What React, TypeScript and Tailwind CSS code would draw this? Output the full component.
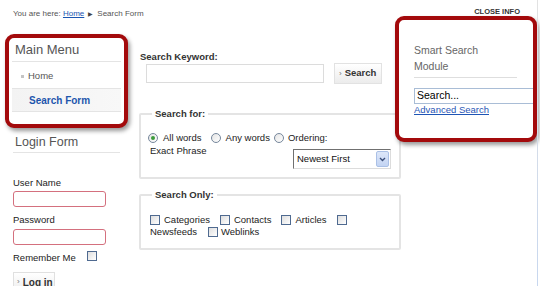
import React from "react";

const Radio = ({ checked }: { checked?: boolean }) => (
  <span className="flex h-[10px] w-[10px] items-center justify-center rounded-full border border-[#76879c] bg-gradient-to-br from-[#e4e4e4] to-white">
    {checked && <span className="h-[4px] w-[4px] rounded-full bg-[#3c9b3c]" />}
  </span>
);

const Check = () => (
  <span className="inline-block h-[10px] w-[10px] border border-[#4f6a90] bg-gradient-to-br from-[#dedede] to-white" />
);

const Legend = ({ children }: { children: React.ReactNode }) => (
  <legend className="ml-[11px] px-[3px] text-[9.5px] font-bold leading-[12px] text-[#333]">
    {children}
  </legend>
);

const App = () => {
  return (
    <div className="flex h-[286px] w-[540px] overflow-hidden bg-white font-['Liberation_Sans',Arial,sans-serif] text-[#333]">
      {/* left + middle */}
      <div className="flex w-[401px] shrink-0 flex-col">
        <div className="h-[34px] shrink-0 pl-[13px] pt-[9px] text-[8px] leading-[10px] text-[#555]">
          You are here: <span className="text-[#1a55b0] underline">Home</span>
          <span className="mx-[4px] text-[6px] text-[#444]">▶</span>
          Search Form
        </div>

        <div className="flex">
          {/* left column */}
          <div className="w-[138px] shrink-0">
            <div className="ml-[5px] h-[94px] w-[123px] rounded-[9px] border-4 border-[#a30a0c] bg-white px-[3px] shadow-[2px_3px_4px_rgba(0,0,0,0.4)]">
              <div className="h-[24px] border-b border-[#e4e4e4] pl-[3px] pt-[4px] text-[13px] leading-[16px] text-[#555]">
                Main Menu
              </div>
              <div className="flex h-[27px] items-center border-b border-[#e4e4e4] pl-[9px] pt-[3px] text-[9.5px] text-[#555]">
                <span className="mr-[4px] h-[3px] w-[3px] bg-[#c4c4c4]" />
                Home
              </div>
              <div className="flex h-[23px] items-center border-b border-[#e4e4e4] bg-gradient-to-r from-[#f3f3f3] to-[#f8f8f8] pl-[17px] text-[10px] font-bold text-[#1d56ad]">
                Search Form
              </div>
            </div>

            <div className="ml-[13px] w-[107px]">
              <div className="h-[25px] border-b border-[#e4e4e4] pl-[2px] pt-[7px] text-[12.5px] leading-[14px] text-[#555]">
                Login Form
              </div>
              <div className="mt-[24px] text-[9.5px] leading-[12px] text-[#222]">User Name</div>
              <div className="mt-[2px] h-[16px] w-[93px] rounded-[3px] border border-[#d4707e] bg-white" />
              <div className="mt-[7px] text-[9.5px] leading-[12px] text-[#222]">Password</div>
              <div className="mt-[3px] h-[16px] w-[93px] rounded-[3px] border border-[#d4707e] bg-white" />
              <div className="mt-[6px] flex items-center text-[9.5px] leading-[12px] text-[#222]">
                Remember Me
                <span className="ml-[11px]">
                  <Check />
                </span>
              </div>
              <div className="mt-[8px] flex h-[20px] w-[42px] items-center border border-[#e0e0e0] bg-gradient-to-b from-white to-[#ededed] pl-[3px] text-[10px] font-bold text-[#333]">
                <span className="mr-[3px] text-[8px] font-normal text-[#777]">›</span>
                Log in
              </div>
            </div>
          </div>

          {/* middle column */}
          <div className="flex-1 pt-[17px]">
            <div className="pl-[2px] text-[9.5px] font-bold leading-[12px] text-[#333]">Search Keyword:</div>
            <div className="flex h-[21px] items-center">
              <div className="ml-[8px] h-[19px] w-[178px] border border-[#dcdcdc] bg-white" />
              <div className="ml-[10px] flex h-[21px] w-[48px] items-center border border-[#e2e2e2] bg-gradient-to-b from-white to-[#ececec] pl-[4px] text-[9.5px] font-bold text-[#333]">
                <span className="mr-[3px] text-[8px] font-normal text-[#777]">›</span>
                Search
              </div>
            </div>

            <fieldset className="ml-[1px] mt-[24px] rounded-[2px] border-2 border-[#e4e4e4] pb-[8px]">
              <Legend>Search for:</Legend>
              <div className="mt-[12px] flex items-center pl-[7px] text-[9.5px] leading-[12px] text-[#222]">
                <Radio checked />
                <span className="ml-[5px]">All words</span>
                <span className="ml-[9px]">
                  <Radio />
                </span>
                <span className="ml-[5px]">Any words</span>
                <span className="ml-[4px]">
                  <Radio />
                </span>
                <span className="ml-[4px]">Ordering:</span>
              </div>
              <div className="mt-[1px] flex items-start pl-[9px] text-[9.5px] leading-[12px] text-[#222]">
                <span className="w-[143px]">Exact Phrase</span>
                <div className="mt-[4px] flex h-[20px] w-[98px] items-center justify-between border border-b-[#dcdcdc] border-l-[#707070] border-r-[#dcdcdc] border-t-[#707070] bg-white pl-[3px] pr-[1px] text-[#111]">
                  <span>Newest First</span>
                  <span className="flex h-[16px] w-[13px] items-center justify-center rounded-[2px] border border-[#aac0e6] bg-gradient-to-b from-[#dde7f9] to-[#c3d4f3]">
                    <svg width="7" height="5" viewBox="0 0 7 5">
                      <path d="M1 1 L3.5 3.5 L6 1" fill="none" stroke="#3b4f7a" strokeWidth="1.4" />
                    </svg>
                  </span>
                </div>
              </div>
            </fieldset>

            <fieldset className="ml-[1px] mt-[10px] rounded-[2px] border-2 border-[#e4e4e4] pb-[10px]">
              <Legend>Search Only:</Legend>
              <div className="mt-[13px] flex items-center gap-[10px] pl-[9px] text-[9.5px] leading-[12px] text-[#222]">
                <span className="flex items-center gap-[4px]">
                  <Check />
                  Categories
                </span>
                <span className="flex items-center gap-[4px]">
                  <Check />
                  Contacts
                </span>
                <span className="flex items-center gap-[4px]">
                  <Check />
                  Articles
                </span>
                <Check />
              </div>
              <div className="flex items-center gap-[11px] pl-[9px] text-[9.5px] leading-[12px] text-[#222]">
                <span>Newsfeeds</span>
                <span className="flex items-center gap-[3px]">
                  <Check />
                  Weblinks
                </span>
              </div>
            </fieldset>
          </div>
        </div>
      </div>

      {/* right column */}
      <div className="relative z-10 -ml-[6px] flex w-[145px] shrink-0">
        <div className="w-[142px] shrink-0">
          <div className="h-[16px] pr-[17px] pt-[7px] text-right text-[7.5px] font-bold leading-[10px] text-[#333]">
            CLOSE INFO
          </div>
          <div className="h-[126px] overflow-hidden rounded-[9px] border-4 border-[#a30a0c] bg-white pl-[15px] pt-[22px] shadow-[2px_3px_4px_rgba(0,0,0,0.4)]">
            <div className="w-[103px] border-b border-[#dedede] pb-[3px] text-[10.5px] leading-[16px] text-[#666]">
              Smart Search
              <br />
              Module
            </div>
            <div className="mt-[10px] flex h-[16px] w-[130px] items-center border border-[#a9bdd6] bg-white pl-[2px] text-[10.5px] text-black">
              Search...
            </div>
            <div className="text-[9.5px] leading-[12px] text-[#1f55b5] underline">Advanced Search</div>
          </div>
        </div>
        <div className="w-px bg-gradient-to-b from-[#e2e2e2] to-[#c7d7ef]" />
      </div>
    </div>
  );
};

export default App;
